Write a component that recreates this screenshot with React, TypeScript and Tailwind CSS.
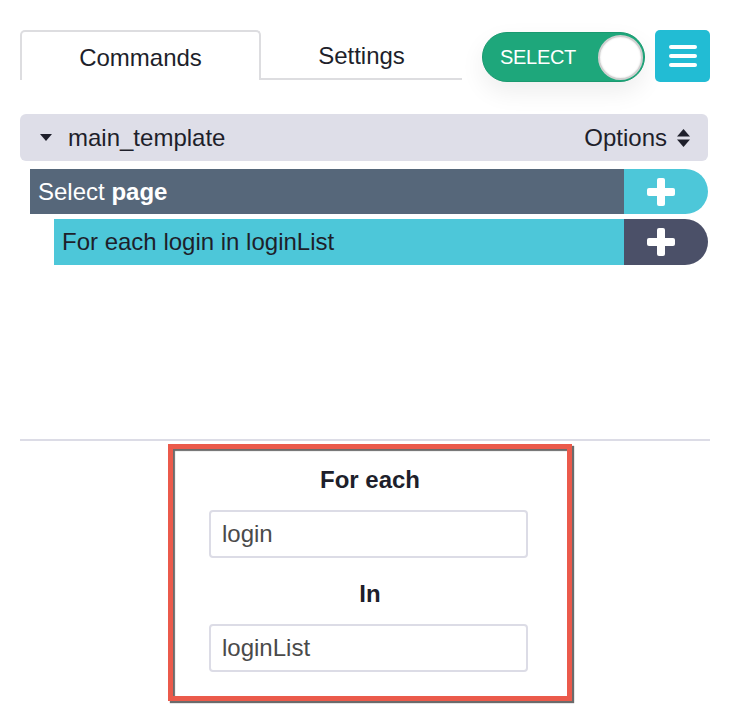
import React from "react";

const PlusIcon = () => (
  <svg width="30" height="30" viewBox="0 0 30 30">
    <rect x="1" y="11" width="28" height="8" rx="2" fill="#fff" />
    <rect x="11" y="1" width="8" height="28" rx="2" fill="#fff" />
  </svg>
);

const App = () => {
  return (
    <div
      className="w-[730px] h-[706px] bg-white text-[#1e1f2b] overflow-hidden"
      style={{ fontFamily: '"Liberation Sans", Arial, sans-serif' }}
    >
      {/* Top bar: tabs + toggle + menu */}
      <div className="flex items-end pt-[30px] pl-[20px] pr-[20px]">
        <div className="flex w-[442px] h-[50px] mb-[2px]">
          <div className="w-[241px] h-full border-2 border-b-0 border-[#dddde0] rounded-t-[5px] flex items-center justify-center pt-[4px] text-[24px]">
            Commands
          </div>
          <div className="flex-1 h-full border-b-2 border-[#dddde0] flex items-center justify-center pt-[4px] text-[24px]">
            Settings
          </div>
        </div>
        <div className="ml-[20px] w-[163px] h-[50px] rounded-full bg-[#1ea77b] border border-[#1a9a70] flex items-center justify-between pl-[17px] pr-[1px] shadow-[0_10px_24px_rgba(0,0,0,0.07)]">
          <span className="text-white text-[20px] tracking-[-0.3px]">SELECT</span>
          <div className="w-[45px] h-[45px] rounded-full bg-white border-2 border-[#d0d0d0] shadow-[inset_0_0_2px_rgba(0,0,0,0.15)]" />
        </div>
        <div className="ml-[10px] w-[55px] h-[52px] rounded-[5px] bg-[#22bcd4] flex flex-col items-center justify-center gap-[5px]">
          <div className="w-[28px] h-[4px] rounded-full bg-white" />
          <div className="w-[28px] h-[4px] rounded-full bg-white" />
          <div className="w-[28px] h-[4px] rounded-full bg-white" />
        </div>
      </div>

      {/* Template header */}
      <div className="mt-[32px] ml-[20px] w-[688px] h-[47px] rounded-[6px] bg-[#dedee8] flex items-center pl-[20px] pr-[18px]">
        <svg width="12" height="7" viewBox="0 0 12 7">
          <polygon points="0,0 12,0 6,7" fill="#1e1f2b" />
        </svg>
        <span className="ml-[16px] text-[24px]">main_template</span>
        <span className="ml-auto text-[24px]">Options</span>
        <svg className="ml-[10px]" width="13" height="18" viewBox="0 0 13 18">
          <polygon points="6.5,0 13,7.5 0,7.5" fill="#1e1f2b" />
          <polygon points="0,10.5 13,10.5 6.5,18" fill="#1e1f2b" />
        </svg>
      </div>

      {/* Commands */}
      <div className="mt-[8px] ml-[30px] w-[678px] h-[45px] flex rounded-l-[5px] rounded-r-full overflow-hidden">
        <div className="flex-1 bg-[#56677a] flex items-center pl-[8px] text-white text-[24px]">
          Select&nbsp;<span className="font-bold">page</span>
        </div>
        <div className="w-[84px] bg-[#4dc7d9] flex items-center justify-center pr-[10px]">
          <PlusIcon />
        </div>
      </div>
      <div className="mt-[5px] ml-[54px] w-[654px] h-[46px] flex rounded-l-[5px] rounded-r-full overflow-hidden">
        <div className="flex-1 bg-[#4dc7d9] flex items-center pl-[8px] text-[24px]">
          For each login in loginList
        </div>
        <div className="w-[84px] bg-[#4b5068] flex items-center justify-center pr-[10px]">
          <PlusIcon />
        </div>
      </div>

      {/* Divider */}
      <div className="mt-[174px] ml-[20px] w-[690px] h-[2px] bg-[#dcdce6]" />

      {/* Edit panel */}
      <div className="mt-[3px] ml-[168px] w-[404px] border-[5px] border-[#eb5a4b] shadow-[2px_2px_1px_#6b6b6b,inset_2px_2px_1px_#6b6b6b] bg-white pt-[17px] pb-[24px]">
        <div className="text-center font-bold text-[24px] leading-[28px]">For each</div>
        <div className="mt-[16px] ml-[36px] w-[319px] h-[48px] border-2 border-[#dcdce6] rounded-[4px] flex items-center pl-[11px] text-[24px] text-[#4a4a4a]">
          login
        </div>
        <div className="mt-[22px] text-center font-bold text-[24px] leading-[28px]">In</div>
        <div className="mt-[16px] ml-[36px] w-[319px] h-[48px] border-2 border-[#dcdce6] rounded-[4px] flex items-center pl-[11px] text-[24px] text-[#4a4a4a]">
          loginList
        </div>
      </div>
    </div>
  );
};

export default App;
